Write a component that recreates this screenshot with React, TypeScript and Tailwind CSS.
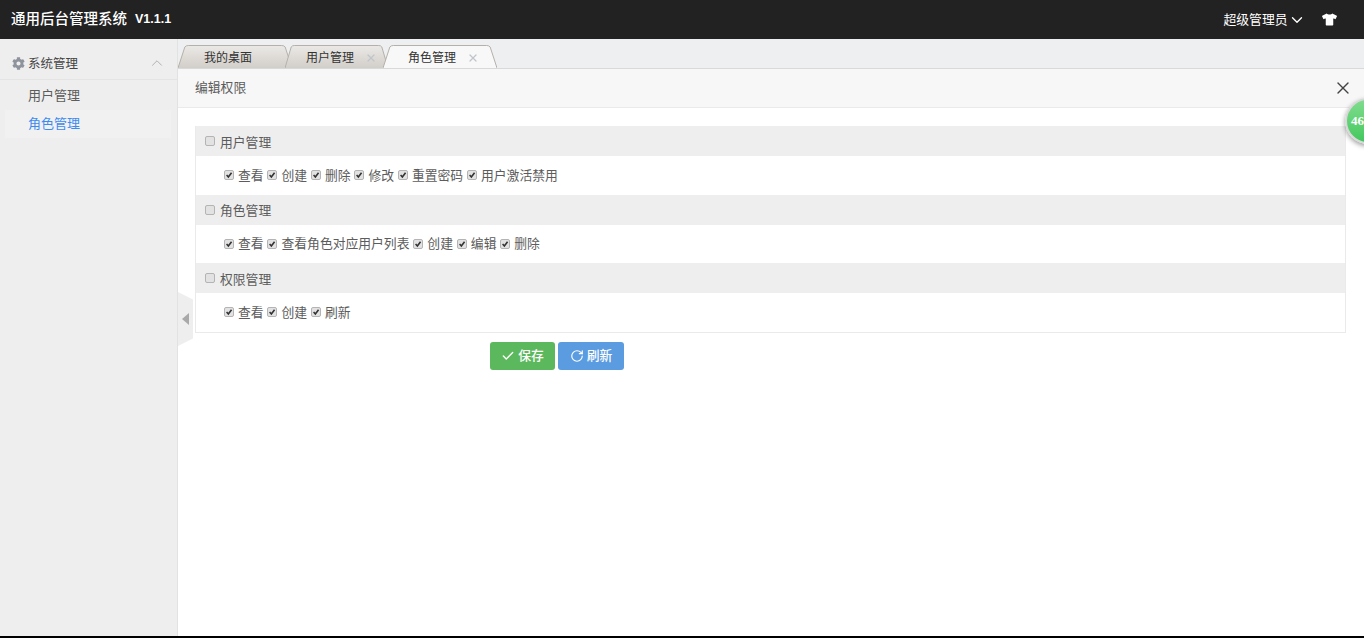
import { ChevronDown, ChevronUp, Check, RotateCw, X } from 'lucide-react';
import { FaCog, FaTshirt } from 'react-icons/fa';

const font = 'font-["Liberation_Sans","Noto_Sans_CJK_SC",sans-serif]';

const groups = [
  { name: '用户管理', perms: ['查看', '创建', '删除', '修改', '重置密码', '用户激活禁用'] },
  { name: '角色管理', perms: ['查看', '查看角色对应用户列表', '创建', '编辑', '删除'] },
  { name: '权限管理', perms: ['查看', '创建', '刷新'] },
];

function Box({ checked }: { checked?: boolean }) {
  return (
    <span className="w-[10px] h-[10px] shrink-0 rounded-[2px] border border-[#b4b4b4] bg-[#e2e2e2] flex items-center justify-center">
      {checked && (
        <svg viewBox="0 0 10 10" className="w-[8px] h-[8px]">
          <path d="M2 5 L4.2 7.4 L8.2 2.2" fill="none" stroke="#333" strokeWidth="2" />
        </svg>
      )}
    </span>
  );
}

function Tab({ label, active, closable, className }: { label: string; active?: boolean; closable?: boolean; className: string }) {
  return (
    <div className={`relative h-[23px] flex items-center ${className}`}>
      <svg className="absolute inset-0 w-full h-full" viewBox="0 0 100 23" preserveAspectRatio="none">
        <defs>
          <linearGradient id="tabIdle" x1="0" y1="0" x2="0" y2="1">
            <stop offset="0" stopColor="#ebe9e6" />
            <stop offset="1" stopColor="#d2cec9" />
          </linearGradient>
        </defs>
        <path
          d="M0 23 L6 2 Q7 0.5 9 0.5 L91 0.5 Q93 0.5 94 2 L100 23"
          fill={active ? '#f8f8f8' : 'url(#tabIdle)'}
          stroke="#b5b0a9"
          strokeWidth="1"
          vectorEffect="non-scaling-stroke"
        />
      </svg>
      <span className="relative pt-[3px] text-[12px] leading-[23px] text-[#333]">{label}</span>
      {closable && <X size={12} strokeWidth={2.4} className="relative ml-[11px] mt-[2px] text-[#c0c4cc]" />}
    </div>
  );
}

export default function App() {
  return (
    <div className={`${font} relative h-[638px] w-[1364px] overflow-hidden bg-white flex flex-col text-[12.8px] text-[#5c5c5c]`}>
      <header className="h-[39px] shrink-0 bg-[#222222] flex items-center pl-[11px] pr-[27px] text-white">
        <span className="text-[14.5px] font-medium">通用后台管理系统</span>
        <span className="ml-[8px] text-[12.5px] font-bold">V1.1.1</span>
        <span className="ml-auto text-[12.8px]">超级管理员</span>
        <ChevronDown size={18} strokeWidth={1.8} />
        <FaTshirt size={15} className="ml-[16.5px]" />
      </header>

      <div className="flex flex-1 min-h-0">
        <aside className="w-[178px] shrink-0 bg-[#eeeeee] border-r border-[#e2e2e2] pt-[8px]">
          <div className="h-[33px] flex items-center pl-[12px] pr-[11px] border-b border-[#e4e4e4] text-[#444]">
            <FaCog size={13} className="text-[#8f939c]" />
            <span className="ml-[3px] pt-[2px] text-[12.5px]">系统管理</span>
            <ChevronUp size={18} strokeWidth={1.2} className="ml-auto text-[#aaa]" />
          </div>
          <div className="h-[30px] leading-[32px] pl-[28px] text-[#5c5c5c] text-[13px]">用户管理</div>
          <div className="h-[28px] leading-[28px] ml-[5px] mr-[6px] pl-[23px] bg-[#f1f1f1] text-[13px] text-[#3d8bf0]">
            角色管理
          </div>
        </aside>

        <main className="relative flex-1 min-w-0 flex flex-col">
          <div className="h-[30px] shrink-0 bg-[#eeeff1] border-b border-[#d9d9d9] flex items-end">
            <Tab label="我的桌面" className="w-[114px] -mr-[7px] pl-[26px]" />
            <Tab label="用户管理" closable className="w-[103px] -mr-[5px] pl-[21px]" />
            <Tab label="角色管理" active closable className="w-[114px] pl-[25px]" />
          </div>

          <div className="h-[39px] shrink-0 bg-[#f7f7f7] border-b border-[#eaeaea] flex items-center justify-between pl-[17px] pr-[11.5px]">
            <span className="pb-[1px]">编辑权限</span>
            <X size={20} strokeWidth={1.6} className="text-[#444]" />
          </div>

          <div className="pl-[17px] pr-[18px] pt-[18px]">
            <div className="border-x border-b border-[#eaeaea]">
              {groups.map((g) => (
                <div key={g.name}>
                  <div className="h-[30px] bg-[#eeeeee] flex items-center pl-[9px]">
                    <Box />
                    <span className="ml-[5px] pt-[3px]">{g.name}</span>
                  </div>
                  <div className="h-[38.5px] flex items-center pl-[28px]">
                    {g.perms.map((p) => (
                      <span key={p} className="flex items-center mr-[3.9px]">
                        <Box checked />
                        <span className="ml-[4px]">{p}</span>
                      </span>
                    ))}
                  </div>
                </div>
              ))}
            </div>

            <div className="mt-[9px] flex gap-[3px] pl-[295px]">
              <button className="h-[28px] w-[65px] rounded-[3px] bg-[#5cb85c] text-white font-medium flex items-center justify-center gap-[3px]">
                <Check size={14} strokeWidth={2.4} />
                保存
              </button>
              <button className="h-[28px] w-[66px] rounded-[3px] bg-[#5b9bdf] text-white font-medium flex items-center justify-center gap-[3px]">
                <RotateCw size={14} strokeWidth={2} />
                刷新
              </button>
            </div>
          </div>

          {/* collapse handle on the sidebar edge */}
          <div className="absolute left-0 top-[253px] w-[15px] h-[54px] bg-[#eeeeee] [clip-path:polygon(0_0,100%_14%,100%_86%,0_100%)] flex items-center justify-center">
            <span className="border-y-[6.5px] border-y-transparent border-r-[7px] border-r-[#a9a9a9]" />
          </div>
        </main>
      </div>

      <div className="h-[2px] shrink-0 bg-black" />

      {/* floating counter ball */}
      <div className="absolute left-[1345px] top-[98px] w-[46px] h-[46px] rounded-full border-[2px] border-[#d8d8d8] bg-gradient-to-b from-[#7fdc8e] to-[#3fc85c] shadow-[0_2px_5px_rgba(0,0,0,0.4)] pl-[4px] leading-[41px] text-white text-[13px] font-bold font-['Liberation_Serif',serif]">
        46
      </div>
    </div>
  );
}
